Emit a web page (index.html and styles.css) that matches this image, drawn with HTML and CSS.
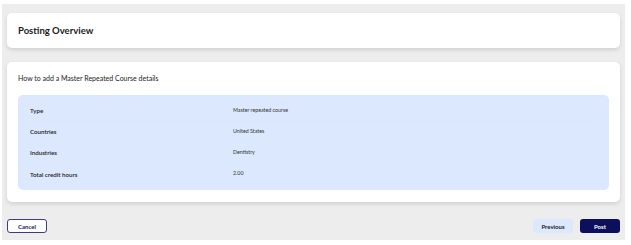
FILE: index.html
```html
<!DOCTYPE html>
<html lang="en">
<head>
    <meta charset="UTF-8">
    <meta name="viewport" content="width=device-width, initial-scale=1.0">
    <title>Posting Overview</title>
    <link rel="stylesheet" href="styles.css">
</head>
<body>
    <div class="page">
        <div class="card header-card">
            <h1 class="title">Posting Overview</h1>
        </div>
        <div class="card details-card">
            <p class="subtitle">How to add a Master Repeated Course details</p>
            <div class="details">
                <div class="row">
                    <span class="label">Type</span>
                    <span class="value">Master repeated course</span>
                </div>
                <div class="row">
                    <span class="label">Countries</span>
                    <span class="value">United States</span>
                </div>
                <div class="row">
                    <span class="label">Industries</span>
                    <span class="value">Dentistry</span>
                </div>
                <div class="row">
                    <span class="label">Total credit hours</span>
                    <span class="value">2.00</span>
                </div>
            </div>
        </div>
        <div class="actions">
            <button class="btn btn-cancel">Cancel</button>
            <div class="actions-right">
                <button class="btn btn-prev">Previous</button>
                <button class="btn btn-post">Post</button>
            </div>
        </div>
    </div>
</body>
</html>
```

FILE: styles.css
```css
body {
    margin: 0;
    padding: 0;
    background: #fff;
    font-family: 'Lato', 'Open Sans', sans-serif;
    color: #222;
}
.page {
    margin: 4px 6px 5px 2px;
    height: 236px;
    box-sizing: border-box;
    padding: 9px 5px 7px 5px;
    background: #ededed;
    display: flex;
    flex-direction: column;
}
.card {
    background: #fff;
    border-radius: 5px;
    box-shadow: 0 2px 4px rgba(0, 0, 0, 0.12);
}
.header-card {
    height: 35px;
    display: flex;
    align-items: center;
    padding: 0 11px;
}
.title {
    margin: 0;
    font-size: 9.5px;
    font-weight: 700;
    color: #1a1a1a;
}
.details-card {
    margin-top: 14px;
    padding: 11px 11px 12px 11px;
}
.subtitle {
    margin: 0 0 12px 0;
    font-size: 7px;
    line-height: 10px;
    color: #222;
}
.details {
    background: #dbe8fd;
    border-radius: 5px;
    padding: 5px 12px 6px 12px;
}
.row {
    display: flex;
    align-items: center;
    height: 21px;
    border-bottom: 1px solid #d9e6fb;
    box-sizing: border-box;
}
.row:last-child {
    border-bottom: none;
}
.label {
    width: 203px;
    font-size: 6.2px;
    font-weight: 600;
    color: #222;
    padding-top: 1px;
}
.value {
    font-size: 5.3px;
    color: #333;
    padding-bottom: 1px;
}
.actions {
    margin-top: auto;
    display: flex;
    justify-content: space-between;
    align-items: center;
}
.actions-right {
    display: flex;
    gap: 7px;
}
.btn {
    width: 40px;
    height: 14px;
    padding: 0;
    border-radius: 3px;
    font-family: inherit;
    font-size: 6px;
    font-weight: 700;
    cursor: pointer;
}
.btn-cancel {
    background: #fff;
    border: 1px solid #3f3d80;
    color: #1a1a4a;
}
.btn-prev {
    background: #dbe8fd;
    border: none;
    color: #222;
}
.btn-post {
    background: #0b0f5c;
    border: none;
    color: #fff;
}
```
